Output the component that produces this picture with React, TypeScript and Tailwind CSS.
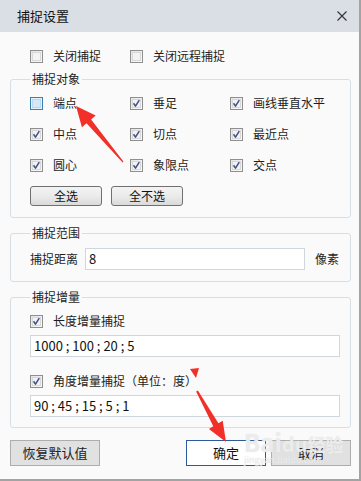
import type { ReactNode } from 'react';

const font = "font-['Noto_Sans_CJK_SC','Noto_Sans',sans-serif]";

function Box({ checked, hover }: { checked?: boolean; hover?: boolean }) {
  return (
    <span
      className={
        'relative flex h-[13px] w-[13px] shrink-0 items-center justify-center border ' +
        (hover ? 'border-[#3c7fb1] bg-[#e6f1fb]' : 'border-[#8f8f8f] bg-gradient-to-br from-[#e4e4e4] to-[#fbfbfb]')
      }
    >
      <span
        className={
          'h-[9px] w-[9px] border ' +
          (hover ? 'border-[#b9d7f0] bg-[#d6e8f8]' : 'border-[#d8d8d8] bg-[#f3f3f3]')
        }
      />
      {checked && (
        <svg viewBox="0 0 13 13" className="absolute inset-0 h-[11px] w-[11px]">
          <path d="M3 6.2 L5.3 9.6 L9.8 2.4" fill="none" stroke="#40518a" strokeWidth="1.8" strokeLinejoin="round" />
        </svg>
      )}
    </span>
  );
}

function Check({ label, checked, hover }: { label: string; checked?: boolean; hover?: boolean }) {
  return (
    <div className="flex h-[16px] items-center gap-[10px]">
      <Box checked={checked} hover={hover} />
      <span className="whitespace-nowrap text-[12px] leading-[16px] text-[#1e1e1e]">{label}</span>
    </div>
  );
}

function Group({ title, children, className }: { title: string; children: ReactNode; className?: string }) {
  return (
    <fieldset className={'rounded-[3px] border border-[#d5dfe5] pl-[19px] pr-[10px] ' + (className ?? '')}>
      <legend className="px-[2px] text-[12px] leading-[16px] text-[#1e1e1e]">{title}</legend>
      {children}
    </fieldset>
  );
}

function Field({ value, className }: { value: string; className?: string }) {
  return (
    <div
      className={
        'flex h-[22px] shrink-0 items-center whitespace-pre border border-[#cfd6dd] bg-white px-[3px] text-[13px] leading-[16px] text-[#111] ' +
        (className ?? '')
      }
    >
      {value}
    </div>
  );
}

export default function App() {
  return (
    <div className={`relative h-[481px] w-[361px] overflow-hidden border-r-2 border-b-2 border-[#a3a3a3] bg-[#fafafa] ${font}`}>
      {/* Title bar */}
      <div className="flex h-[32px] items-center justify-between bg-[#dadee5] pl-[17px] pr-[12px]">
        <span className="text-[13px] leading-[16px] text-[#111]">捕捉设置</span>
        <svg viewBox="0 0 10 10" className="h-[10px] w-[10px]">
          <path d="M0.5 0.5 L9.5 9.5 M9.5 0.5 L0.5 9.5" stroke="#333" strokeWidth="1.1" />
        </svg>
      </div>

      <div className="pl-[10px] pr-[8px]">
        {/* Top options */}
        <div className="mt-[16px] flex pl-[20px]">
          <div className="w-[100px]">
            <Check label="关闭捕捉" />
          </div>
          <Check label="关闭远程捕捉" />
        </div>

        {/* 捕捉对象 */}
        <Group title="捕捉对象" className="mt-[7px] pb-[11px]">
          <div className="mt-[8px] grid grid-cols-[100px_100px_1fr] gap-y-[15px]">
            <Check label="端点" hover />
            <Check label="垂足" checked />
            <Check label="画线垂直水平" checked />
            <Check label="中点" checked />
            <Check label="切点" checked />
            <Check label="最近点" checked />
            <Check label="圆心" checked />
            <Check label="象限点" checked />
            <Check label="交点" checked />
          </div>
          <div className="mt-[13px] flex gap-[9px]">
            {['全选', '全不选'].map((t) => (
              <button
                key={t}
                className="h-[20px] w-[72px] rounded-[3px] border border-[#707070] bg-gradient-to-b from-[#f3f3f3] via-[#ebebeb] to-[#dadada] text-[12px] leading-[16px] text-[#111]"
              >
                {t}
              </button>
            ))}
          </div>
        </Group>

        {/* 捕捉范围 */}
        <Group title="捕捉范围" className="mt-[7px] pb-[11px]">
          <div className="mt-[7px] flex items-center">
            <span className="w-[55px] shrink-0 whitespace-nowrap text-[12px] leading-[16px] text-[#1e1e1e]">捕捉距离</span>
            <Field value="8" className="w-[220px]" />
            <span className="ml-[10px] shrink-0 whitespace-nowrap text-[12px] leading-[16px] text-[#1e1e1e]">像素</span>
          </div>
        </Group>

        {/* 捕捉增量 */}
        <Group title="捕捉增量" className="mt-[7px] pb-[10px]">
          <div className="mt-[8px]">
            <Check label="长度增量捕捉" checked />
          </div>
          <Field value="1000 ; 100 ; 20 ; 5" className="mt-[6px]" />
          <div className="mt-[16px]">
            <Check label="角度增量捕捉（单位：度）" checked />
          </div>
          <Field value="90 ; 45 ; 15 ; 5 ; 1" className="mt-[6px]" />
        </Group>

        {/* Footer buttons */}
        <div className="mt-[12px] flex">
          <button className="h-[26px] w-[90px] border border-[#adadad] bg-[#e1e1e1] text-[13px] text-[#222]">
            恢复默认值
          </button>
          <div className="ml-auto flex gap-[5px]">
            <button className="h-[26px] w-[80px] border border-[#2d5a9a] bg-white text-[13px] text-[#111]">
              确定
            </button>
            <button className="h-[26px] w-[80px] border border-[#adadad] bg-[#e1e1e1] text-[13px] text-[#222]">
              取消
            </button>
          </div>
        </div>
      </div>

      {/* Baidu watermark */}
      <div className="pointer-events-none absolute left-[244px] top-[430px] leading-none text-white/60 [text-shadow:0_0_1px_#d0d0d0]">
        <div className="text-[24px] font-bold">
          Bai<span className="text-[20px]">du</span>
          <span className="text-[18px]">经验</span>
        </div>
        <div className="mt-[1px] text-[9px]">jingyan.baidu.com</div>
      </div>

      {/* Red annotation arrows */}
      <svg className="pointer-events-none absolute left-0 top-0" width="361" height="481">
        <polygon
          fill="#f2302a"
          points="76,106 95.7,115.6 91.1,119.5 123.4,161.4 122.6,162.6 86.5,123.3 81.9,127.2"
        />
        <polygon
          fill="#f2302a"
          points="226,442 222.7,420.7 218.4,423.3 197.9,390.6 196.1,391.4 213.3,426.3 208.9,428.9"
        />
        <polygon fill="#f2302a" points="190,369 199,368 196,378" />
      </svg>
    </div>
  );
}
